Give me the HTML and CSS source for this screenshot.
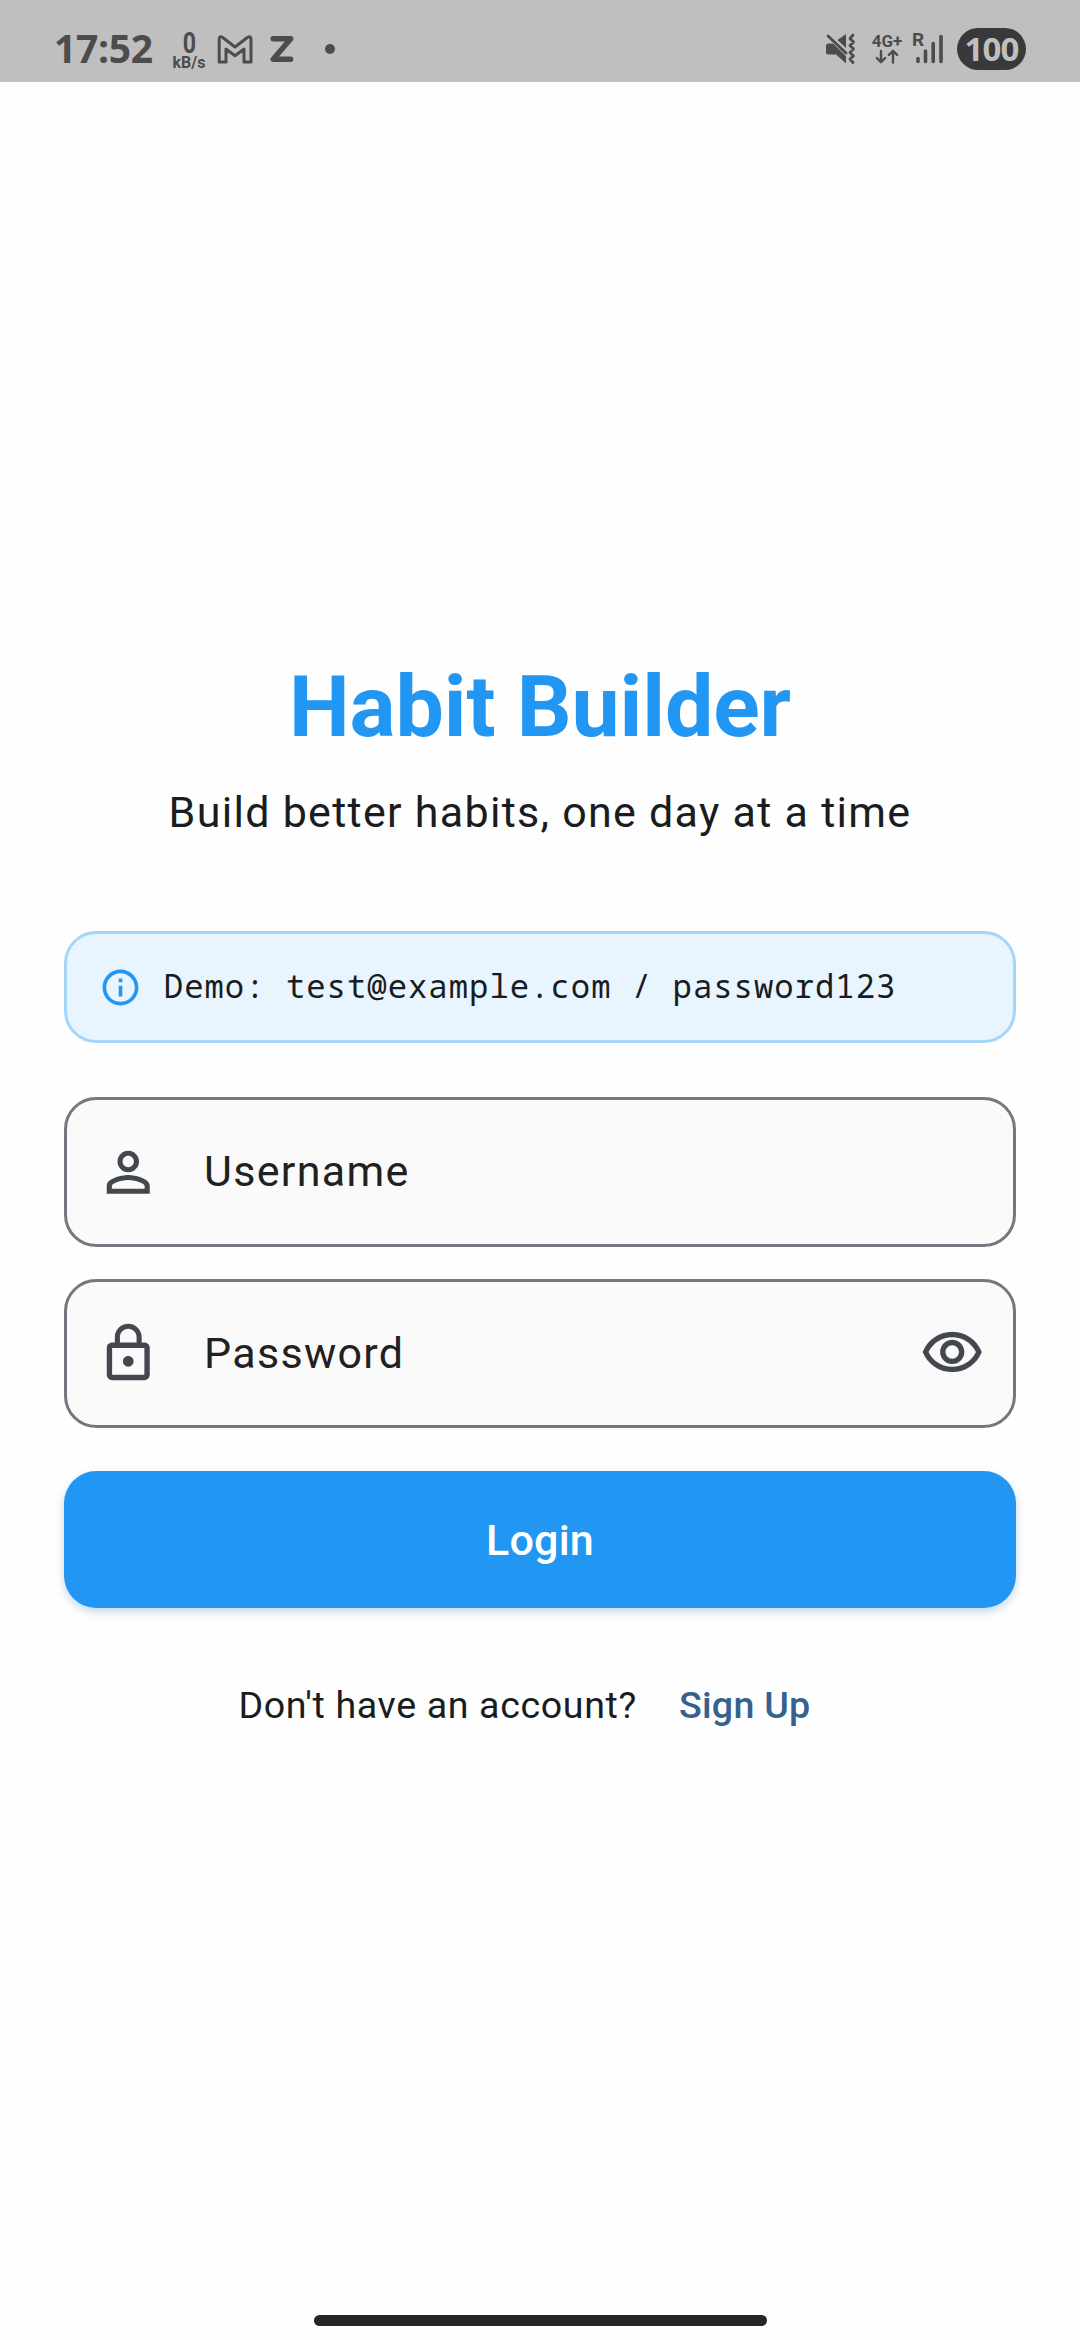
FILE: index.html
```html
<!DOCTYPE html>
<html lang="en">
<head>
<meta charset="utf-8">
<title>Habit Builder</title>
<link rel="stylesheet" href="styles.css">
</head>
<body>
<header class="status">
  <div class="status-group">
    <span class="clock">17:52</span>
    <div class="speed"><span class="speed-value">0</span><span class="speed-unit">kB/s</span></div>
    <svg class="mail" width="38" height="30" viewBox="0 0 38 30"><path d="M3.2 28V5.3Q3.2 1.2 6.7 3.5L19 13 31.300 3.500Q35 1.200 35 5.300V28H28V15L19 21.700 10 15V28Z"/></svg>
    <svg class="zed" width="24" height="28" viewBox="0 0 24 28"><path d="M3.200 3.700H20.700L3.200 24.200H20.700"/></svg>
    <span class="dot"></span>
  </div>
  <div class="status-group">
    <svg class="mute" width="32" height="32" viewBox="0 0 32 32"><path d="M1 13Q1 10.500 3.500 10.500H8L21 23V30.500L11 21.500H3.500Q1 21.500 1 19ZM12.500 7L21 1V15Z"/><path class="line" d="M3 3L21 20M28 2L25 5.500 28.500 9 25 12.500 28.500 16 25 19.500 28.500 23 25 26 28 29.500"/></svg>
    <div class="network"><span>4G+</span>
      <svg width="26" height="16" viewBox="0 0 26 16"><path d="M7 2V13M2.800 9L7 13.200 11.200 9M19 13.500V2M14.800 6L19 1.800 23.200 6"/></svg>
    </div>
    <svg class="signal" width="34" height="34" viewBox="0 0 34 34"><text x="1" y="14">R</text><path d="M7 26.500V29.500M14.500 19V29.500M22.200 11.500V29.500M30 4.500V29.500"/></svg>
    <span class="battery">100</span>
  </div>
</header>
<main class="login">
  <h1 class="title">Habit Builder</h1>
  <p class="subtitle">Build better habits, one day at a time</p>
  <div class="demo">
    <svg class="icon-small" viewBox="0 0 24 24"><path d="M11 7h2v2h-2zm0 4h2v6h-2zm1-9C6.480 2 2 6.480 2 12s4.480 10 10 10 10-4.480 10-10S17.520 2 12 2zm0 18c-4.410 0-8-3.590-8-8s3.590-8 8-8 8 3.590 8 8-3.590 8-8 8z"/></svg>
    <span class="demo-text">Demo: test@example.com / password123</span>
  </div>
  <div class="field">
    <svg class="icon" viewBox="0 0 24 24"><path d="M12 5.900c1.160 0 2.100.940 2.100 2.100s-.940 2.100-2.100 2.100S9.900 9.160 9.900 8s.940-2.100 2.100-2.100m0 9c2.970 0 6.100 1.460 6.100 2.100v1.100H5.900V17c0-.640 3.130-2.100 6.100-2.100M12 4C9.790 4 8 5.790 8 8s1.790 4 4 4 4-1.790 4-4-1.790-4-4-4zm0 9c-2.670 0-8 1.340-8 4v3h16v-3c0-2.660-5.330-4-8-4z"/></svg>
    <span class="label">Username</span>
  </div>
  <div class="field">
    <svg class="icon" viewBox="0 0 24 24"><path fill-rule="evenodd" d="M12 17c1.100 0 2-.900 2-2s-.900-2-2-2-2 .900-2 2 .900 2 2 2zm6-9h-1V6c0-2.760-2.240-5-5-5S7 3.240 7 6v2H6c-1.100 0-2 .900-2 2v10c0 1.100.900 2 2 2h12c1.100 0 2-.900 2-2V10c0-1.100-.900-2-2-2zM8.900 6c0-1.710 1.390-3.100 3.100-3.100s3.100 1.390 3.100 3.100v2H8.900V6zM18 20H6V10h12v10z"/></svg>
    <span class="label">Password</span>
    <svg class="icon" viewBox="0 0 24 24"><path d="M12 6c3.790 0 7.170 2.130 8.820 5.500C19.170 14.870 15.790 17 12 17s-7.170-2.130-8.820-5.500C4.830 8.130 8.210 6 12 6m0-2C7 4 2.730 7.110 1 11.500 2.730 15.890 7 19 12 19s9.270-3.110 11-7.500C21.270 7.110 17 4 12 4zm0 5c1.380 0 2.500 1.120 2.500 2.500S13.380 14 12 14s-2.500-1.120-2.500-2.500S10.620 9 12 9m0-2c-2.480 0-4.500 2.020-4.500 4.500S9.520 16 12 16s4.500-2.020 4.500-4.500S14.480 7 12 7z"/></svg>
  </div>
  <button class="submit">Login</button>
  <div class="signup"><span>Don't have an account?</span><a class="link">Sign Up</a></div>
</main>
<div class="home-bar"></div>
</body>
</html>
```
FILE: styles.css
```css
* { box-sizing: border-box; }
body {
  margin: 0;
  width: 1080px;
  height: 2340px;
  display: flex;
  flex-direction: column;
  background: #fefefe;
  color: #191c20;
  font-family: Roboto, sans-serif;
}
svg { display: block; flex: none; overflow: visible; }

.status {
  height: 82px;
  padding: 15px 54px 0 54px;
  display: flex;
  justify-content: space-between;
  background: #bfbfbf;
  color: #4c4c4c;
}
.status-group { display: flex; align-items: center; height: 68px; }
.clock { width: 118px; padding-bottom: 2px; font: 700 39px/60px "Open Sans", sans-serif; letter-spacing: -0.300px; }
.speed { width: 34px; display: flex; flex-direction: column; align-items: center; font-weight: 700; padding-top: 3px; }
.speed-value { font-size: 29px; line-height: 24px; transform: scaleX(.8); }
.speed-unit { font-size: 16px; line-height: 16px; }
.mail { margin-left: 10px; fill: none; stroke: #4c4c4c; stroke-width: 3; stroke-linejoin: round; }
.zed { margin-left: 16px; fill: none; stroke: #4c4c4c; stroke-width: 5.400; stroke-linejoin: round; stroke-linecap: round; }
.dot { margin-left: 31px; width: 10px; height: 10px; border-radius: 50%; background: #4c4c4c; }
.mute { fill: #4c4c4c; }
.mute .line { fill: none; stroke: #4c4c4c; stroke-width: 2.800; stroke-linecap: round; stroke-linejoin: round; }
.network { width: 34px; margin-left: 13px; display: flex; flex-direction: column; align-items: center; font-size: 17px; font-weight: 700; line-height: 16px; }
.network svg { fill: none; stroke: #4c4c4c; stroke-width: 2.400; stroke-linecap: round; stroke-linejoin: round; }
.signal { margin-left: 7px; fill: #4c4c4c; font-size: 19px; font-weight: 700; }
.signal path { stroke: #4c4c4c; stroke-width: 3.600; stroke-linecap: round; }
.battery {
  width: 69px;
  height: 42px;
  margin-left: 12px;
  border-radius: 21px;
  background: #393939;
  color: #bfbfbf;
  font: 700 33px/41px "Open Sans", sans-serif;
  letter-spacing: -0.800px;
  text-align: center;
}

.login { flex: 1; padding: 575px 64.300px 0; display: flex; flex-direction: column; }
.title { margin: 0; text-align: center; color: #2196f3; font-size: 86px; font-weight: 700; line-height: 100px; letter-spacing: -0.100px; }
.subtitle { margin: 23px 0 0; text-align: center; font-size: 43px; line-height: 64px; letter-spacing: 1.290px; }
.demo {
  height: 112.400px;
  margin-top: 87px;
  padding: 0 32px;
  display: flex;
  align-items: center;
  gap: 21.500px;
  border: 3px solid #a6d5fa;
  border-radius: 32.250px;
  background: #e8f4fe;
  font: 32.250px/43px "Droid Sans Mono", "Noto Sans Mono", "DejaVu Sans Mono", monospace;
  letter-spacing: 1.000px;
  white-space: nowrap;
}
.demo-text { padding-bottom: 3px; font-weight: 370; }
.icon-small { width: 43px; height: 43px; fill: #2196f3; }
.icon { width: 64.500px; height: 64.500px; fill: #43474e; }
.field {
  height: 149.800px;
  margin-top: 32px;
  padding: 0 28.700px;
  display: flex;
  align-items: center;
  border: 3px solid #73777f;
  border-radius: 32.250px;
  background: #fafafa;
}
.demo + .field { margin-top: 53.500px; }
.label { flex: 1; padding: 0 0 2px 43.600px; color: #212121; font-size: 43px; line-height: 64px; letter-spacing: 1.290px; }
.submit {
  height: 136.500px;
  margin-top: 42.800px;
  padding: 1px 0 0;
  border: 0;
  border-radius: 32.250px;
  background: #2196f3;
  box-shadow: 0 4px 8px rgba(33, 110, 180, .25);
  color: #fff;
  font: 500 43px/64px Roboto, sans-serif;
  letter-spacing: 0.200px;
}
.signup {
  margin-top: 70px;
  padding-right: 31px;
  display: flex;
  justify-content: center;
  gap: 42px;
  font-size: 37.625px;
  line-height: 54px;
  letter-spacing: 0.620px;
}
.link { color: #36618e; font-weight: 500; letter-spacing: 0.270px; }
.home-bar { width: 453px; height: 11px; margin: 0 auto 14px; border-radius: 6px; background: #262626; }
```
